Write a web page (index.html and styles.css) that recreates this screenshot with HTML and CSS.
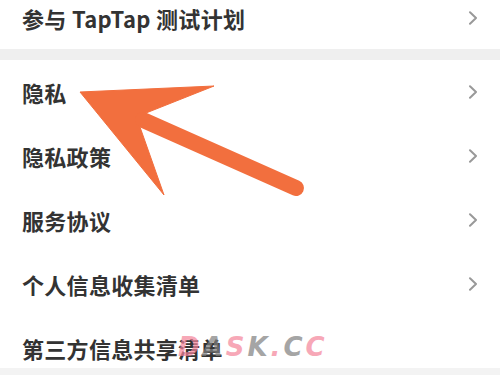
FILE: index.html
```html
<!DOCTYPE html>
<html lang="zh-CN">
<head>
<meta charset="utf-8">
<link rel="stylesheet" href="styles.css">
</head>
<body>
<div class="page">
  <div class="row first">
    <span class="label">参与 TapTap 测试计划</span>
    <svg class="chev" viewBox="0 0 10 14" width="10" height="14"><path d="M2 1.2 L8 7 L2 12.8" /></svg>
  </div>
  <div class="band"></div>
  <div class="row">
    <span class="label">隐私</span>
    <svg class="chev" viewBox="0 0 10 14" width="10" height="14"><path d="M2 1.2 L8 7 L2 12.8" /></svg>
  </div>
  <div class="row">
    <span class="label">隐私政策</span>
    <svg class="chev" viewBox="0 0 10 14" width="10" height="14"><path d="M2 1.2 L8 7 L2 12.8" /></svg>
  </div>
  <div class="row">
    <span class="label">服务协议</span>
    <svg class="chev" viewBox="0 0 10 14" width="10" height="14"><path d="M2 1.2 L8 7 L2 12.8" /></svg>
  </div>
  <div class="row">
    <span class="label">个人信息收集清单</span>
    <svg class="chev" viewBox="0 0 10 14" width="10" height="14"><path d="M2 1.2 L8 7 L2 12.8" /></svg>
  </div>
  <div class="row last">
    <span class="label">第三方信息共享清单</span>
  </div>
  <div class="band bottom"></div>

  <svg class="arrow" viewBox="0 0 500 375" width="500" height="375">
    <polygon points="80,92 214,86 146,113 140,127 164,195" />
    <line x1="143" y1="120" x2="296" y2="188" />
  </svg>

  <div class="watermark"><span class="pk">D</span><span class="gy">A</span><span class="pk">S</span><span class="gy">K</span><span class="pk">.</span><span class="gy">C</span><span class="pk">C</span></div>
</div>
</body>
</html>
```

FILE: styles.css
```css
html, body {
  margin: 0;
  padding: 0;
  background: #ffffff;
}
.page {
  position: relative;
  width: 500px;
  height: 375px;
  overflow: hidden;
  font-family: "Noto Sans CJK SC", "Noto Sans", sans-serif;
  color: #333333;
  display: flex;
  flex-direction: column;
}
.row {
  height: 64px;
  flex: none;
  box-sizing: border-box;
  display: flex;
  align-items: center;
  justify-content: space-between;
  padding: 0 22px 0 22px;
}
.row.first {
  height: 49px;
  padding-bottom: 13px;
}
.row.last {
  height: 52px;
  align-items: flex-start;
  padding-top: 20px;
}
.label {
  font-size: 22px;
  line-height: 24px;
  font-weight: 700;
  letter-spacing: 0.3px;
}
.chev {
  display: block;
}
.chev path {
  fill: none;
  stroke: #999999;
  stroke-width: 2;
  stroke-linecap: round;
  stroke-linejoin: round;
}
.band {
  height: 11px;
  flex: none;
  background: #efefef;
}
.band.bottom {
  height: 7px;
  background: #f3f3f3;
}
.arrow {
  position: absolute;
  left: 0;
  top: 0;
}
.arrow polygon {
  fill: #f26f3e;
  stroke: #f26f3e;
  stroke-width: 1;
  stroke-linejoin: miter;
}
.arrow line {
  stroke: #f26f3e;
  stroke-width: 16;
  stroke-linecap: round;
}
.watermark {
  position: absolute;
  left: 178px;
  top: 332px;
  font-family: "DejaVu Sans", sans-serif;
  font-weight: 700;
  font-style: italic;
  font-size: 26px;
  line-height: 30px;
  letter-spacing: 3px;
  opacity: 0.7;
}
.watermark .pk { color: #f4849a; }
.watermark .gy { color: #808080; }
```
